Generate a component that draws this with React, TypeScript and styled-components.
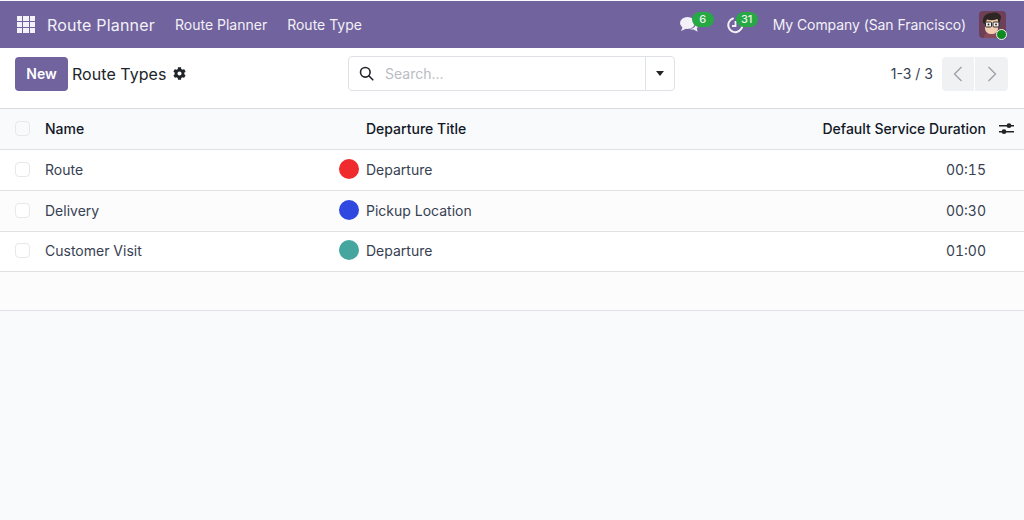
import React from "react";
import styled, { createGlobalStyle } from "styled-components";
import { FaCog } from "react-icons/fa";

const Global = createGlobalStyle`
  html, body { margin: 0; padding: 0; height: 100%; background: #f9fafb; }
  body { font-family: Inter, "Noto Sans", sans-serif; color: #212529; overflow: hidden; }
  #root { height: 100%; }
`;

const Page = styled.div`
  width: 1024px;
  height: 520px;
  display: flex;
  flex-direction: column;
  background: #f9fafb;
`;

const NavBar = styled.header`
  height: 47px;
  margin-top: 1px;
  background: #71639e;
  color: #fff;
  display: flex;
  align-items: center;
  flex: none;
`;

const AppsButton = styled.span`
  width: 18px;
  height: 18px;
  margin-left: 17px;
  display: grid;
  grid-template-columns: repeat(3, 5.2px);
  grid-auto-rows: 5.2px;
  gap: 1.2px;
`;

const AppDot = styled.i`
  background: #f4f2f8;
  display: block;
`;

const Brand = styled.span`
  font-size: 16px;
  margin-left: 12px;
  margin-right: 20px;
  color: #f3f1f7;
  letter-spacing: 0.2px;
`;

const NavLink = styled.span`
  font-size: 14px;
  margin-right: 20px;
  color: #f3f1f7;
`;

const NavRight = styled.div`
  margin-left: auto;
  display: flex;
  align-items: center;
  padding-right: 18px;
`;

const Systray = styled.span<{ $gap: number }>`
  position: relative;
  display: block;
  width: 20px;
  height: 20px;
  margin-right: ${(p) => p.$gap}px;
`;

const Badge = styled.span<{ $left: number; $w: number }>`
  position: absolute;
  top: -3px;
  left: ${(p) => p.$left}px;
  width: ${(p) => p.$w}px;
  height: 15px;
  border-radius: 8px;
  background: #28a745;
  color: #e9f6ec;
  font-size: 11px;
  line-height: 14px;
  text-align: center;
  font-weight: 500;
`;

const Company = styled.span`
  font-size: 14px;
  color: #f3f1f7;
  margin-right: 13px;
  letter-spacing: -0.08px;
`;

const AvatarBox = styled.span`
  position: relative;
  display: block;
  width: 27px;
  height: 27px;
  border-radius: 4px;
`;

const Presence = styled.span`
  position: absolute;
  right: -1px;
  bottom: -2px;
  width: 9px;
  height: 9px;
  border-radius: 50%;
  background: #0f8a1f;
  border: 1.5px solid #f3f1f7;
`;

const ControlPanel = styled.section`
  height: 61px;
  box-sizing: border-box;
  flex: none;
  background: #fff;
  border-bottom: 1px solid #d8dadd;
  display: grid;
  grid-template-columns: 333px 327px 1fr;
  align-items: center;
  padding: 0 16px 9px 15px;
`;

const TitleGroup = styled.div`
  display: flex;
  align-items: center;
`;

const NewButton = styled.button`
  width: 53px;
  height: 34px;
  border: 0;
  border-radius: 4px;
  background: #71639e;
  color: #fff;
  font: 600 14px Inter, sans-serif;
  padding: 0;
  margin-right: 4px;
`;

const Title = styled.span`
  font-size: 16px;
  color: #212529;
  margin-right: 7px;
  letter-spacing: 0.05px;
`;

const Search = styled.div`
  display: flex;
  height: 35px;
  width: 327px;
  border: 1px solid #dee2e6;
  border-radius: 4px;
  box-sizing: border-box;
  align-items: stretch;
  background: #fff;
`;

const SearchField = styled.div`
  flex: 1;
  display: flex;
  align-items: center;
  padding-left: 10px;
  gap: 11px;
  font-size: 14px;
  color: #b9bcc2;
`;

const SearchToggle = styled.div`
  width: 28px;
  border-left: 1px solid #dee2e6;
  display: flex;
  align-items: center;
  justify-content: center;
`;

const Caret = styled.i`
  display: block;
  border-top: 5px solid #212529;
  border-left: 4.5px solid transparent;
  border-right: 4.5px solid transparent;
`;

const Pager = styled.div`
  justify-self: end;
  display: flex;
  align-items: center;
  font-size: 14px;
  color: #374151;
`;

const PagerText = styled.span`
  margin-right: 9px;
`;

const PagerButton = styled.span<{ $first?: boolean }>`
  width: ${(p) => (p.$first ? 32 : 33)}px;
  height: 34px;
  background: #f0f1f3;
  display: flex;
  align-items: center;
  justify-content: center;
  margin-left: ${(p) => (p.$first ? 0 : 1)}px;
  border-radius: ${(p) => (p.$first ? "4px 0 0 4px" : "0 4px 4px 0")};
`;

const Table = styled.div`
  background: #fff;
  flex: none;
`;

const columns = `
  display: grid;
  box-sizing: border-box;
  grid-template-columns: 45px 321px 1fr 190px 38px;
  align-items: center;
  font-size: 14px;
`;

const HeadRow = styled.div`
  ${columns}
  height: 41px;
  padding-bottom: 1px;
  background: #f9fafb;
  border-bottom: 1px solid #dee2e6;
  font-weight: 500;
  color: #111827;
`;

const Row = styled.div<{ $alt?: boolean }>`
  ${columns}
  height: 41px;
  padding-bottom: 2px;
  border-bottom: 1px solid #dfe1e4;
  color: #374151;
  background: ${(p) => (p.$alt ? "#fcfcfd" : "#fff")};
  &:last-child {
    height: 40px;
    padding-bottom: 3px;
  }
`;

const Check = styled.span<{ $head?: boolean }>`
  display: block;
  width: 13px;
  height: 13px;
  margin-left: 15px;
  border: 1px solid #e6e8eb;
  border-radius: 4px;
  background: ${(p) => (p.$head ? "#f9fafb" : "#fff")};
`;

const TitleCell = styled.span`
  position: relative;
  display: block;
`;

const Dot = styled.span<{ $color: string }>`
  position: absolute;
  left: -27px;
  top: 50%;
  margin-top: -10px;
  width: 20px;
  height: 20px;
  border-radius: 50%;
  background: ${(p) => p.$color};
`;

const Right = styled.span`
  text-align: right;
  font-variant-numeric: tabular-nums;
`;

const HeadRight = styled.span`
  text-align: right;
  white-space: nowrap;
`;

const OptionalIcon = styled.span`
  display: flex;
  justify-content: center;
  padding-left: 3px;
`;

const Spacer = styled.div`
  height: 38px;
  flex: none;
  background: #fcfcfd;
  border-bottom: 1px solid #dfe1e4;
`;

const rows = [
  { name: "Route", title: "Departure", color: "#ef2b2d", time: "00:15" },
  { name: "Delivery", title: "Pickup Location", color: "#2f48e0", time: "00:30", alt: true },
  { name: "Customer Visit", title: "Departure", color: "#44a69f", time: "01:00" },
];

const Avatar = () => (
  <svg width="27" height="27" viewBox="0 0 27 27">
    <rect width="27" height="27" rx="4" fill="#6d4058" />
    <path d="M5 27c0-4 3-6 8-6s8 2 8 6z" fill="#8a4a58" />
    <path d="M6 10c0-4 3-6 6.500-6S19 6 19 10v7c0 4-3 6-6.500 6S6 21 6 17z" fill="#f3cdb0" />
    <path d="M4 12C3 5 8 1.500 13 2c3-1.500 9 .5 9 4 0 2-1 4-2 6l-1.500-4C15 9.500 11 9.500 8 8.500L6 13z" fill="#2d2622" />
    <rect x="6.500" y="11" width="6" height="5" rx="1" fill="#f4f1ec" stroke="#2b2b2b" strokeWidth="1" />
    <rect x="14" y="11" width="6" height="5" rx="1" fill="#f4f1ec" stroke="#2b2b2b" strokeWidth="1" />
    <circle cx="9.500" cy="13.500" r=".9" fill="#222" />
    <circle cx="17" cy="13.500" r=".9" fill="#222" />
  </svg>
);

const ChatIcon = () => (
  <svg width="20" height="20" viewBox="0 0 20 20" fill="#f3f1f7">
    <ellipse cx="7.500" cy="8" rx="7.500" ry="6" />
    <path d="M3 11.500l-2 4.500 5.500-2.500z" />
    <path d="M16 8.500c2 1 2.500 3.300.8 5l.8 3.300-4-2.300c-1.400.2-2.800 0-3.800-.6 3.500 0 6.300-2.400 6.200-5.400z" />
  </svg>
);

const ClockIcon = () => (
  <svg width="20" height="20" viewBox="0 0 20 20" fill="none" stroke="#f3f1f7" strokeWidth="2">
    <path d="M6 3.500A7 7 0 1 0 15.200 9" strokeLinecap="round" />
    <path d="M8.500 6v5H5" strokeWidth="1.800" />
  </svg>
);

const SearchIcon = () => (
  <svg width="15" height="15" viewBox="0 0 15 15" fill="none" stroke="#212529" strokeWidth="1.600">
    <circle cx="6.300" cy="6.300" r="4.800" />
    <path d="M9.800 9.800l4 4" strokeLinecap="round" />
  </svg>
);

const Chevron = ({ left }: { left?: boolean }) => (
  <svg width="10" height="16" viewBox="0 0 10 16" fill="none" stroke="#9a9ea5" strokeWidth="1.300">
    <path d={left ? "M8.500 1L1.500 8l7 7" : "M1.500 1l7 7-7 7"} />
  </svg>
);

const Sliders = () => (
  <svg width="15" height="13" viewBox="0 0 15 13" fill="#212529">
    <rect y="3" width="15" height="1.500" />
    <rect y="9" width="15" height="1.500" />
    <circle cx="10" cy="3.700" r="2.400" />
    <circle cx="5" cy="9.700" r="2.400" />
  </svg>
);

export default function App() {
  return (
    <Page>
      <Global />
      <NavBar>
        <AppsButton>
          {Array.from({ length: 9 }).map((_, i) => (
            <AppDot key={i} />
          ))}
        </AppsButton>
        <Brand>Route Planner</Brand>
        <NavLink>Route Planner</NavLink>
        <NavLink>Route Type</NavLink>
        <NavRight>
          <Systray $gap={27}>
            <ChatIcon />
            <Badge $left={12} $w={22}>6</Badge>
          </Systray>
          <Systray $gap={26}>
            <ClockIcon />
            <Badge $left={9} $w={22}>31</Badge>
          </Systray>
          <Company>My Company (San Francisco)</Company>
          <AvatarBox>
            <Avatar />
            <Presence />
          </AvatarBox>
        </NavRight>
      </NavBar>
      <ControlPanel>
        <TitleGroup>
          <NewButton>New</NewButton>
          <Title>Route Types</Title>
          <FaCog size={13} color="#212529" />
        </TitleGroup>
        <Search>
          <SearchField>
            <SearchIcon />
            Search...
          </SearchField>
          <SearchToggle>
            <Caret />
          </SearchToggle>
        </Search>
        <Pager>
          <PagerText>1-3 / 3</PagerText>
          <PagerButton $first>
            <Chevron left />
          </PagerButton>
          <PagerButton>
            <Chevron />
          </PagerButton>
        </Pager>
      </ControlPanel>
      <Table>
        <HeadRow>
          <Check $head />
          <span>Name</span>
          <span>Departure Title</span>
          <HeadRight>Default Service Duration</HeadRight>
          <OptionalIcon>
            <Sliders />
          </OptionalIcon>
        </HeadRow>
        {rows.map((r) => (
          <Row key={r.name} $alt={r.alt}>
            <Check />
            <span>{r.name}</span>
            <TitleCell>
              <Dot $color={r.color} />
              {r.title}
            </TitleCell>
            <Right>{r.time}</Right>
            <span />
          </Row>
        ))}
      </Table>
      <Spacer />
    </Page>
  );
}
